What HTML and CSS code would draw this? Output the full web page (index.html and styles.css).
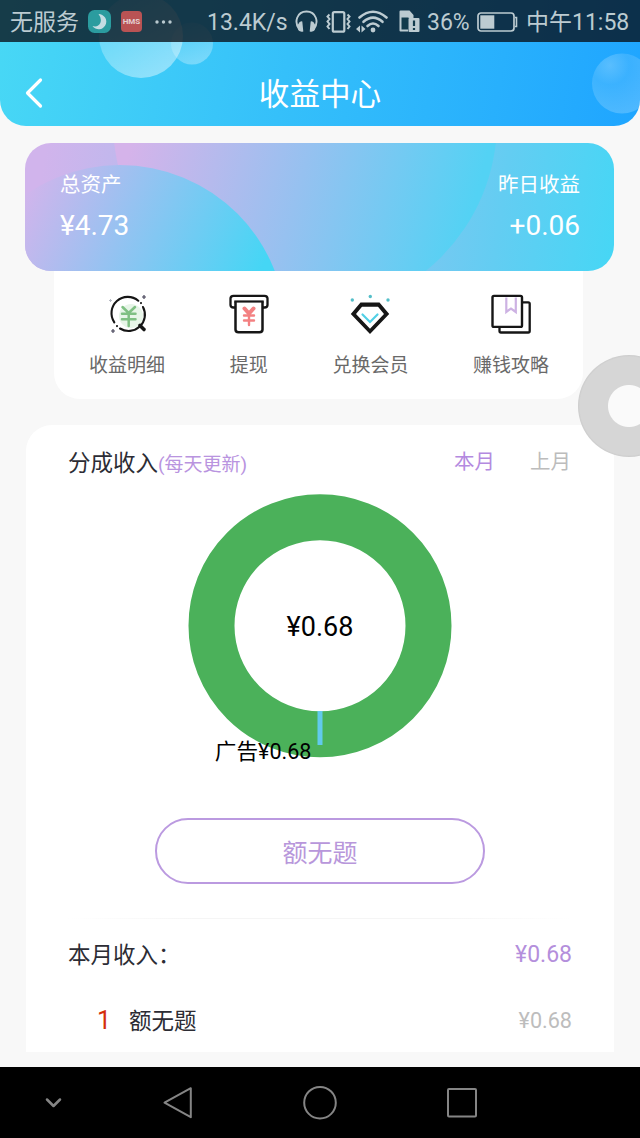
FILE: index.html
```html
<!DOCTYPE html>
<html lang="zh-CN">
<head>
<meta charset="utf-8">
<title>收益中心</title>
<link rel="stylesheet" href="styles.css">
</head>
<body>
<div class="screen">
  <header class="top">
    <svg class="bubbles" width="640" height="126" viewBox="0 0 640 126">
      <defs>
        <linearGradient id="bubA" x1="0" y1="0" x2="0.6" y2="1"><stop offset="0" stop-color="#fff" stop-opacity=".1"/><stop offset="1" stop-color="#fff" stop-opacity=".42"/></linearGradient>
        <linearGradient id="bubB" x1="0" y1="0" x2="0.4" y2="1"><stop offset="0" stop-color="#fff" stop-opacity=".05"/><stop offset="1" stop-color="#fff" stop-opacity=".3"/></linearGradient>
        <radialGradient id="bubC" cx=".3" cy=".2" r=".8"><stop offset="0" stop-color="#fff" stop-opacity=".25"/><stop offset=".4" stop-color="#fff" stop-opacity=".12"/><stop offset="1" stop-color="#fff" stop-opacity=".2"/></radialGradient>
      </defs>
      <circle cx="192" cy="43.500" r="21" fill="url(#bubB)"/>
      <circle cx="141" cy="36" r="42" fill="url(#bubA)"/>
      <circle cx="622" cy="83.500" r="30" fill="url(#bubC)"/>
    </svg>
    <div class="status">
      <span class="carrier">无服务</span>
      <svg class="s-moon" width="23" height="23" viewBox="0 0 23 23"><rect width="23" height="23" rx="6.500" fill="#2b9c9f"/><path d="M10.500 4A7.600 7.600 0 1 1 4.500 16Q10 17.500 12.300 13Q14 8.500 10.500 4Z" fill="#c4dde3"/></svg>
      <span class="hms">HMS</span>
      <svg class="s-dots" width="18" height="4" viewBox="0 0 18 4" fill="#b9c9cf"><circle cx="2" cy="2" r="1.700"/><circle cx="8.500" cy="2" r="1.700"/><circle cx="15" cy="2" r="1.700"/></svg>
      <span class="speed">13.4K/s</span>
      <svg class="s-head" width="23" height="23" viewBox="0 0 23 23"><path d="M4.500 20C-1.500 12 2 1.500 11.500 1.500S24.500 12 18.500 20" fill="none" stroke="#bccbd1" stroke-width="1.900"/><path d="M3 14.500Q5 10.500 7.300 11.500L8.300 21.500Q4 22.500 3 19ZM20 14.500Q18 10.500 15.700 11.500L14.700 21.500Q19 22.500 20 19Z" fill="#bccbd1"/></svg>
      <svg class="s-vib" width="25" height="22" viewBox="0 0 25 22" fill="none" stroke="#bccbd1"><rect x="6.800" y="1.200" width="11.500" height="19.500" rx="1.500" stroke-width="2.200"/><path d="M3.500 3.500L1.500 5.500L3.500 8L1.500 10.500L3.500 13L1.500 15.500L3.500 18M21.500 3.500L23.500 5.500L21.500 8L23.500 10.500L21.500 13L23.500 15.500L21.500 18" stroke-width="2"/></svg>
      <svg class="s-wifi" width="33" height="23" viewBox="0 0 33 23"><g fill="none" stroke="#bccbd1" stroke-width="2.600" stroke-linecap="round"><path d="M3.500 7.500Q17 -4 30.500 7.500"/><path d="M7.500 11.800Q17 3.500 26.500 11.800"/><path d="M11.500 16Q17 11 22.500 16"/></g><circle cx="17" cy="20" r="2.400" fill="#bccbd1"/><path d="M0 19L4 15.500V22.500ZM9.500 19L5.500 15.500V22.500Z" fill="#bccbd1"/></svg>
      <svg class="s-sim" width="22" height="23" viewBox="0 0 22 23"><path d="M.5 1.500Q.5 .5 1.500 .5H10.500L14.500 5V8H9V21.500H1.500Q.5 21.500 .5 20.500Z" fill="#bccbd1"/><path d="M2.500 7.500H9.500V19.500H2.500Z" fill="#123b4c"/><rect x="9.500" y="8" width="11" height="14" rx="1" fill="#bccbd1"/><path d="M15 10.500V16M15 18V20" stroke="#123b4c" stroke-width="2.200"/></svg>
      <span class="pct">36%</span>
      <svg class="s-bat" width="41" height="20" viewBox="0 0 41 20"><rect x="1" y="1" width="36" height="18" rx="3" fill="none" stroke="#bccbd1" stroke-width="1.700"/><path d="M38 5.500H39.500V14.500H38" fill="none" stroke="#bccbd1" stroke-width="1.600"/><rect x="3.300" y="3.300" width="14" height="13.400" fill="#bccbd1"/></svg>
      <span class="clock">中午11:58</span>
    </div>
    <div class="titlebar">
      <svg class="back" width="18" height="32" viewBox="0 0 18 32"><path d="M15.500 3L2.500 16L15.500 29" fill="none" stroke="#fff" stroke-width="3.200" stroke-linecap="round" stroke-linejoin="round"/></svg>
      <h1 class="title">收益中心</h1>
    </div>
  </header>

  <main class="content">
    <section class="assets">
      <svg class="assets-bg" width="589" height="128" viewBox="25 143 589 128">
        <defs>
          <linearGradient id="gBase" gradientUnits="userSpaceOnUse" x1="45" y1="150" x2="614" y2="235"><stop offset="0" stop-color="#d1b4ec"/><stop offset=".5" stop-color="#93c2f0"/><stop offset=".8" stop-color="#63cdf2"/><stop offset="1" stop-color="#47d6f5"/></linearGradient>
          <linearGradient id="gMid" gradientUnits="userSpaceOnUse" x1="135" y1="130" x2="470" y2="220"><stop offset="0" stop-color="#d5b3ea"/><stop offset=".5" stop-color="#96c1f0"/><stop offset="1" stop-color="#53d2f4"/></linearGradient>
          <linearGradient id="gFront" gradientUnits="userSpaceOnUse" x1="32" y1="185" x2="255" y2="285"><stop offset="0" stop-color="#cfb5ec"/><stop offset=".4" stop-color="#97c2f1"/><stop offset="1" stop-color="#45d6f5"/></linearGradient>
        </defs>
        <rect x="25" y="143" width="589" height="128" fill="url(#gBase)"/>
        <circle cx="305" cy="121.700" r="192" fill="url(#gMid)"/>
        <circle cx="120" cy="331" r="166" fill="url(#gFront)"/>
      </svg>
      <div class="asset">
        <span class="asset-label">总资产</span>
        <span class="asset-value">¥4.73</span>
      </div>
      <div class="asset asset-right">
        <span class="asset-label">昨日收益</span>
        <span class="asset-value">+0.06</span>
      </div>
    </section>

    <nav class="menu">
      <a class="item">
        <svg width="42" height="42" viewBox="0 0 42 42">
          <circle cx="25" cy="23" r="12" fill="#e7f5e8"/>
          <g fill="none" stroke="#161616" stroke-width="2.100" stroke-linecap="round"><path d="M8.300 29.300A16.300 16.300 0 0 1 32.300 7.700M37 14A16.300 16.300 0 0 1 14 35.500"/><path d="M35 10V10.100M11 33V33.100"/></g>
          <path d="M34 32.500L38 36.500" stroke="#161616" stroke-width="3.600" stroke-linecap="round"/>
          <path d="M16.500 14L22.700 20L29 14M16 20.700H29.500M16 26.300H29.500M22.700 20V33" fill="none" stroke="#7fc083" stroke-width="2.500" stroke-linecap="round"/>
          <path d="M38 2V6M36 4H40M7 36V40M5 38H9" stroke="#454358" stroke-width="1.200"/><path d="M4.500 6V9M3 7.500H6" stroke="#b7bac4"/>
        </svg>
        <span>收益明细</span>
      </a>
      <a class="item">
        <svg width="42" height="42" viewBox="0 0 42 42">
          <path d="M7 14.500H5.500Q2.500 14.500 2.500 12V5.500Q2.500 2.800 5.500 2.800H36.500Q39.500 2.800 39.500 5.500V12Q39.500 14.500 36.500 14.500H35" fill="none" stroke="#161616" stroke-width="2.300"/>
          <path d="M6.300 8.500H35.700" stroke="#161616" stroke-width="2.200"/><path d="M7.500 8.500V36.500Q7.500 39.200 10.500 39.200H31.500Q34.500 39.200 34.500 36.500V8.500" fill="none" stroke="#161616" stroke-width="2.500"/>
          <path d="M16.500 15.500L21 20.500L25.500 15.500" fill="none" stroke="#f38182" stroke-width="4" stroke-linecap="round"/><path d="M16 22.500H26M16 27.500H26M21 20V32" fill="none" stroke="#f38182" stroke-width="2.400" stroke-linecap="round"/>
        </svg>
        <span>提现</span>
      </a>
      <a class="item">
        <svg width="42" height="42" viewBox="0 0 42 42">
          <path fill-rule="evenodd" d="M11.500 9.500H30.500L40.200 21L21 41L1.800 21ZM13 13.700L7 21L21 35.800L35 21L29 13.700Z" fill="#161616"/>
          <path d="M13.500 21.500L21 29L28.500 21.500" fill="none" stroke="#52d0e6" stroke-width="2.200" stroke-linecap="round"/>
          <g fill="#55bfc9"><circle cx="3.300" cy="7" r="1.700"/><circle cx="21.300" cy="3.500" r="1.700"/><circle cx="39" cy="7" r="1.700"/></g>
        </svg>
        <span>兑换会员</span>
      </a>
      <a class="item">
        <svg width="42" height="42" viewBox="0 0 42 42" fill="none">
          <rect x="9.500" y="9.300" width="30.200" height="30.200" rx="1.500" stroke="#161616" stroke-width="2.300"/>
          <rect x="2.500" y="2.900" width="29.500" height="31" rx="1.500" fill="#fff" stroke="#161616" stroke-width="2.400"/>
          <path d="M16.300 4.500V19L21 15.500L25.800 19V4.500" stroke="#cdb2e3" stroke-width="2.200"/>
        </svg>
        <span>赚钱攻略</span>
      </a>
    </nav>

    <section class="income">
      <div class="income-head">
        <h2 class="income-title">分成收入</h2><span class="income-note">(每天更新)</span>
        <div class="tabs"><span class="tab tab-on">本月</span><span class="tab">上月</span></div>
      </div>
      <svg class="donut" width="264" height="284" viewBox="188 494 264 284">
        <circle cx="320" cy="625.700" r="108.500" fill="none" stroke="#4bb15a" stroke-width="46"/>
        <path d="M320 711V745" stroke="#62caec" stroke-width="5"/>
        <text x="320" y="636" text-anchor="middle" class="donut-total">¥0.68</text>
        <text x="311.500" y="758.500" text-anchor="end" class="donut-label">广告¥0.68</text>
      </svg>
      <button class="pill">额无题</button>
      <div class="rule"></div>
      <div class="row sum"><span class="sum-name">本月收入：</span><span class="sum-value">¥0.68</span></div>
      <div class="row entry"><span class="rank">1</span><span class="entry-name">额无题</span><span class="entry-value">¥0.68</span></div>
    </section>
  </main>

  <footer class="navbar">
    <svg width="640" height="71" viewBox="0 0 640 71" fill="none" stroke="#858585" stroke-width="2" stroke-linejoin="round">
      <path d="M47 32.500L53.500 39L60 32.500" stroke-width="2.500" stroke-linecap="round"/>
      <path d="M190.800 21.200V50.200L164.500 35.700Z"/>
      <circle cx="320" cy="35.700" r="15.800"/>
      <rect x="448" y="22" width="28" height="27.500" rx="1"/>
    </svg>
  </footer>
  <div class="floater"></div>
</div>
</body>
</html>
```
FILE: styles.css
```css
* { box-sizing: border-box; }
body { margin: 0; font-family: Roboto, "Noto Sans CJK SC", sans-serif; color: #2c2c34; background: #f8f8f8; }
h1, h2 { margin: 0; font-weight: 400; }
.screen { position: relative; width: 640px; height: 1138px; overflow: hidden; display: flex; flex-direction: column; background: #f8f8f8; }

.top { position: relative; height: 126px; flex: none; overflow: hidden; border-radius: 0 0 26px 26px; background: linear-gradient(100deg, #48d8f5 0%, #35c0fa 45%, #1fa5ff 100%); }
.bubbles { position: absolute; left: 0; top: 0; }
.status { position: relative; height: 42px; display: flex; align-items: center; padding: 1px 0 0 10px; background: rgba(6, 10, 18, .76); color: #bccbd1; font-size: 23px; line-height: 40px; white-space: nowrap; }
.status svg { flex: none; display: block; }
.carrier, .speed, .pct, .clock { padding-top: 3px; }
.carrier { width: 69px; }
.s-moon { margin-left: 9px; }
.hms { width: 21px; height: 21px; margin-left: 10px; border-radius: 4px; background: #b95354; color: #e3d0d2; font-size: 8px; font-weight: 700; line-height: 21px; text-align: center; }
.s-dots { margin-left: 13px; }
.speed { margin-left: 34px; width: 81px; }
.s-head { margin-left: 7px; }
.s-vib { margin-left: 8px; }
.s-wifi { margin-left: 5px; }
.s-sim { margin-left: 10px; }
.pct { margin-left: 6px; width: 43px; }
.s-bat { margin-left: 7px; }
.clock { margin-left: 8px; }
.titlebar { position: relative; height: 84px; display: grid; grid-template-columns: 44px 1fr 44px; align-items: center; padding-top: 17px; }
.back { margin-left: 25px; }
.title { color: #fff; font-size: 30.6px; line-height: 44px; padding-top: 5px; text-align: center; }

.content { flex: 1; padding: 17px 26px 0 25px; display: flex; flex-direction: column; }
.assets { position: relative; height: 128px; flex: none; overflow: hidden; border-radius: 26px; display: flex; justify-content: space-between; padding: 27px 34px 0 35px; color: #fff; }
.assets-bg { position: absolute; left: 0; top: 0; }
.asset { position: relative; display: flex; flex-direction: column; }
.asset-right { align-items: flex-end; }
.asset-label { font-size: 20.5px; line-height: 30px; }
.asset-value { font-size: 28px; line-height: 36px; margin-top: 8px; }

.menu { height: 128px; flex: none; margin: 0 31px 0 29px; padding: 22px 0 0 35px; display: flex; gap: 64.7px; background: #fff; border-radius: 0 0 26px 26px; }
.item { display: flex; flex-direction: column; align-items: center; font-size: 19px; line-height: 28px; color: #696969; white-space: nowrap; }
.item svg { display: block; margin: 0 -2px 17px; }

.income { height: 627px; flex: none; margin: 26px 0 0 1px; background: #fff; border-radius: 26px 26px 0 0; display: flex; flex-direction: column; }
.income-head { height: 69px; flex: none; display: flex; align-items: baseline; padding: 21px 43px 0 42px; }
.income-title { font-size: 22.5px; line-height: 34px; }
.income-note { font-size: 19px; color: #b994df; }
.tabs { margin-left: auto; display: flex; gap: 35px; padding-top: 1px; font-size: 20.5px; line-height: 30px; color: #bcbcbc; align-self: flex-start; }
.tab-on { color: #b48ae0; }
.donut { display: block; flex: none; align-self: center; }
.donut-total { font-size: 27px; fill: #000; }
.donut-label { font-size: 21.6px; fill: #000; }
.pill { flex: none; align-self: center; width: 330px; height: 66px; margin-top: 40px; padding: 0; border: 2px solid #bb9ae0; border-radius: 33px; background: #fff; color: #b897db; font: inherit; font-size: 25px; }
.rule { flex: none; height: 1px; margin: 34px 42px 0; background: linear-gradient(90deg, #fff, #f5f5f5 25%, #f5f5f5 75%, #fff); }
.row { flex: none; display: flex; align-items: center; padding: 0 42px; font-size: 22.5px; }
.sum { height: 70px; }
.sum-name, .entry-name { padding-bottom: 3px; }
.sum-value { margin-left: auto; font-size: 23px; color: #b48fdc; }
.entry { height: 63px; padding-left: 71px; }
.rank { width: 32px; font-size: 25px; color: #d42e0c; }
.entry-value { margin-left: auto; font-size: 21.6px; color: #bdbdbd; }

.navbar { height: 71px; flex: none; background: #000; }
.navbar svg { display: block; }
.floater { position: absolute; left: 578px; top: 355px; width: 102px; height: 102px; border-radius: 50%; background: radial-gradient(circle, #fafafa 0 20.5px, #d6d6d6 21.5px 49px, #cbcbcb 51px); }
```
